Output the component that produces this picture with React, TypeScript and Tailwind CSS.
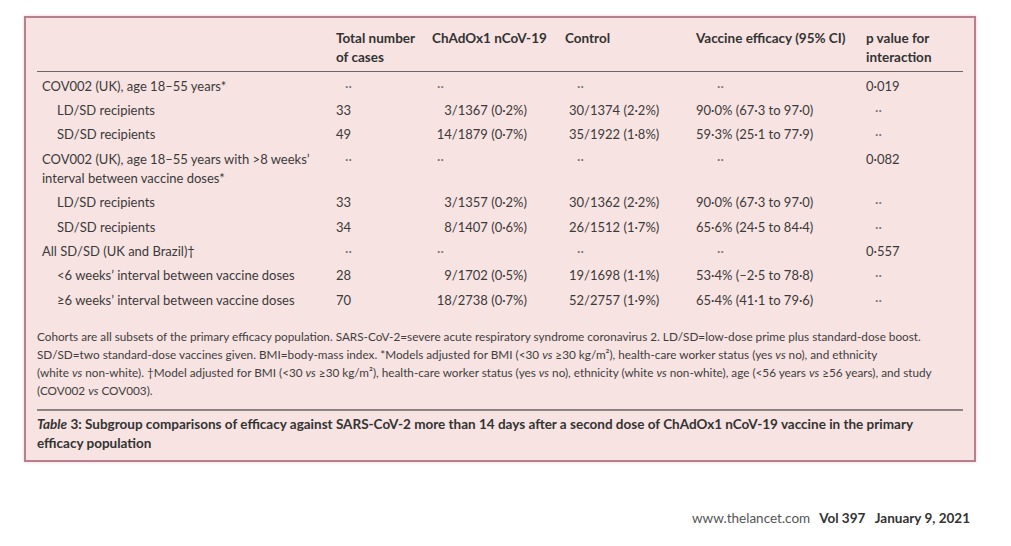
const cols = "grid grid-cols-[299px_96px_133px_131px_170px_97px]";

type Row = {
  label: string;
  sub?: boolean;
  total: string;
  vac: string;
  ctrl: string;
  eff: string;
  p: string;
  wrap?: string;
};

const D = "··";

const rows: Row[] = [
  { label: "COV002 (UK), age 18–55 years*", total: D, vac: D, ctrl: D, eff: D, p: "0·019" },
  { label: "LD/SD recipients", sub: true, total: "33", vac: "3/1367 (0·2%)", ctrl: "30/1374 (2·2%)", eff: "90·0% (67·3 to 97·0)", p: D },
  { label: "SD/SD recipients", sub: true, total: "49", vac: "14/1879 (0·7%)", ctrl: "35/1922 (1·8%)", eff: "59·3% (25·1 to 77·9)", p: D },
  {
    label: "COV002 (UK), age 18–55 years with >8 weeks’",
    wrap: "interval between vaccine doses*",
    total: D,
    vac: D,
    ctrl: D,
    eff: D,
    p: "0·082",
  },
  { label: "LD/SD recipients", sub: true, total: "33", vac: "3/1357 (0·2%)", ctrl: "30/1362 (2·2%)", eff: "90·0% (67·3 to 97·0)", p: D },
  { label: "SD/SD recipients", sub: true, total: "34", vac: "8/1407 (0·6%)", ctrl: "26/1512 (1·7%)", eff: "65·6% (24·5 to 84·4)", p: D },
  { label: "All SD/SD (UK and Brazil)†", total: D, vac: D, ctrl: D, eff: D, p: "0·557" },
  { label: "<6 weeks’ interval between vaccine doses", sub: true, total: "28", vac: "9/1702 (0·5%)", ctrl: "19/1698 (1·1%)", eff: "53·4% (–2·5 to 78·8)", p: D },
  { label: "≥6 weeks’ interval between vaccine doses", sub: true, total: "70", vac: "18/2738 (0·7%)", ctrl: "52/2757 (1·9%)", eff: "65·4% (41·1 to 79·6)", p: D },
];

function Cell({ value, dotPad, numClass }: { value: string; dotPad: string; numClass: string }) {
  if (value === D) return <div className={`text-[#777] ${dotPad}`}>{value}</div>;
  return <div className={numClass}>{value}</div>;
}

export default function App() {
  return (
    <div className="min-h-[546px] w-[1011px] bg-white font-['Lato',sans-serif] text-[#3b3a3a]">
      <div className="pl-[24px] pt-[16px]">
        <div className="w-[952px] border-2 border-[#b7808e] bg-[#f7e3e2] px-[11px] pb-[7px] pt-[11px] shadow-[0_0_3px_#f3c9cf]">
          {/* header */}
          <div className={`${cols} border-b border-[#6f6767] pb-[4px] text-[13.5px] font-bold leading-[19px] text-[#333]`}>
            <div />
            <div>
              Total number
              <br />
              of cases
            </div>
            <div>ChAdOx1 nCoV-19</div>
            <div>Control</div>
            <div>Vaccine efficacy (95% CI)</div>
            <div>
              p value for
              <br />
              interaction
            </div>
          </div>

          {/* body */}
          <div className="pt-[2px] text-[13px] leading-[19px]">
            {rows.map((r, i) => (
              <div key={i} className={`${cols} py-[2.7px]`}>
                <div className={r.sub ? "pl-[20px]" : "pl-[5px]"}>
                  {r.label}
                  {r.wrap && (
                    <>
                      <br />
                      {r.wrap}
                    </>
                  )}
                </div>
                <Cell value={r.total} dotPad="pl-[9px]" numClass="" />
                <Cell value={r.vac} dotPad="pl-[5px]" numClass="pr-[38px] text-right" />
                <Cell value={r.ctrl} dotPad="pl-[12px]" numClass="pl-[4px]" />
                <Cell value={r.eff} dotPad="pl-[21px]" numClass="" />
                <Cell value={r.p} dotPad="pl-[9px]" numClass="" />
              </div>
            ))}
          </div>

          {/* footnote */}
          <div className="mt-[16px] border-b-2 border-[#8c8384] pb-[9px] text-[11.75px] leading-[18px] text-[#3f3e3e]">
            Cohorts are all subsets of the primary efficacy population. SARS-CoV-2=severe acute respiratory syndrome coronavirus 2. LD/SD=low-dose prime plus standard-dose boost.
            <br />
            SD/SD=two standard-dose vaccines given. BMI=body-mass index. *Models adjusted for BMI (&lt;30 <i>vs</i> ≥30 kg/m²), health-care worker status (yes <i>vs</i> no), and ethnicity
            <br />
            (white <i>vs</i> non-white). †Model adjusted for BMI (&lt;30 <i>vs</i> ≥30 kg/m²), health-care worker status (yes <i>vs</i> no), ethnicity (white <i>vs</i> non-white), age (&lt;56 years <i>vs</i> ≥56 years), and study
            <br />
            (COV002 <i>vs</i> COV003).
          </div>

          {/* caption */}
          <div className="pt-[4px] text-[13.5px] font-bold leading-[19px] text-[#333]">
            <i>Table</i> 3: Subgroup comparisons of efficacy against SARS-CoV-2 more than 14 days after a second dose of ChAdOx1 nCoV-19 vaccine in the primary
            <br />
            efficacy population
          </div>
        </div>
      </div>

      <div className="flex justify-end gap-[9px] pr-[41px] pt-[47px] text-[13.5px] leading-[19px]">
        <span className="text-[#555]">www.thelancet.com</span>
        <span className="font-bold text-[#333]">
          Vol 397&nbsp;&nbsp; January 9, 2021
        </span>
      </div>
    </div>
  );
}
